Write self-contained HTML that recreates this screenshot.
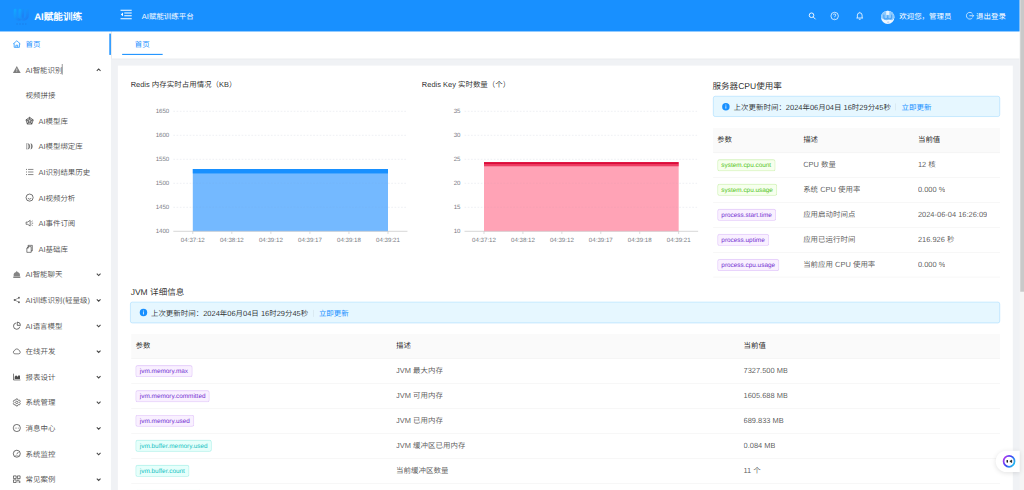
<!DOCTYPE html>
<html lang="zh-CN">
<head>
<meta charset="utf-8">
<title>AI赋能训练平台</title>
<style>
*{box-sizing:border-box;margin:0;padding:0}
html,body{width:1024px;height:490px;overflow:hidden;background:#f0f2f5}
body{font-family:"Liberation Sans",sans-serif}
#app{text-rendering:geometricPrecision;position:absolute;left:0;top:0;width:1920px;height:919px;transform:scale(.5333333);transform-origin:0 0;
 font-family:"Liberation Sans",sans-serif;font-size:14px;line-height:22px;color:rgba(0,0,0,.85);overflow:hidden;background:#f0f2f5}
.abs{position:absolute;white-space:nowrap}
svg{display:block;overflow:visible}

/* header */
#hd{position:absolute;left:0;top:0;width:1912px;height:59px;background:#1890ff;color:#fff}
#hd .logo-t{position:absolute;left:64px;top:18px;font-size:18px;font-weight:700;line-height:26px;white-space:nowrap}
#hd .crumb{position:absolute;left:266px;top:19px;font-size:14px;line-height:22px;white-space:nowrap}
#hd .t{position:absolute;top:19px;line-height:22px;white-space:nowrap}

/* sidebar */
#sb{position:absolute;left:0;top:58px;width:208.400px;height:861px;background:#fff;overflow:hidden}
#sb .it{position:absolute;left:0;width:208.400px;height:40px;line-height:40px;white-space:nowrap;color:rgba(0,0,0,.7)}
#sb .it .ic{position:absolute;left:23.500px;top:12.500px;width:15px;height:15px}
#sb .it .ic svg{width:15px;height:15px}
#sb .it .tx{position:absolute;left:48px;top:0}
#sb .it.ch .ic{left:47.500px}
#sb .it.ch .tx{left:72px}
#sb .it.ch.ni .tx{left:48px}
#sb .it .ar{position:absolute;left:180px;top:16px;width:10px;height:8px;color:rgba(0,0,0,.72)}
#sb .it .cur{position:absolute;left:116px;top:9px;width:1.200px;height:20px;background:#444}
#sb .it.on{color:#1890ff;border-right:3px solid #1890ff}

/* tabs */
#tb{position:absolute;left:208.400px;top:58px;width:1703.600px;height:51.800px;background:#fff;box-shadow:0 1px 3px rgba(0,0,0,.16);border-left:1.200px solid #d4d4d4}
#tb .tab{position:absolute;left:19.400px;top:2px;width:76px;height:43px;line-height:46.500px;text-align:center;color:#1890ff}
#tb .tab:after{content:"";position:absolute;left:0;top:41.300px;width:76px;height:1.400px;background:#1890ff}

/* main panel */
#pn{position:absolute;left:221px;top:123px;width:1678px;height:800px;background:#fff}
.h16{font-size:16px;line-height:24px;color:rgba(0,0,0,.86)}
.h14{font-size:14px;line-height:22px;color:rgba(0,0,0,.86)}
.alert{position:absolute;height:39.600px;background:#e6f7ff;border:1px solid #9fdaff;border-radius:4px;white-space:nowrap;overflow:hidden}
.alert .i{position:absolute;left:16.500px;top:12px;width:14px;height:14px}
.alert .m{position:absolute;left:38px;top:9.500px;line-height:22px;color:rgba(0,0,0,.82)}
.alert .dv{display:inline-block;width:1px;height:13px;background:rgba(0,0,0,.1);margin:0 10px 0 9px;vertical-align:-1px}
.alert a{color:#1890ff;text-decoration:none}

.tbl{position:absolute}
.tbl .th,.tbl .tr{position:relative;height:46.750px;border-bottom:1px solid #f0f0f0;white-space:nowrap}
.tbl .th{background:#fafafa;color:rgba(0,0,0,.85)}
.tbl .c{position:absolute;top:11.200px;line-height:22px;overflow:hidden;color:rgba(0,0,0,.68)}
.tbl .th .c{color:rgba(0,0,0,.88)}
.tag{display:inline-block;margin-top:.8px;height:22px;line-height:20px;padding:0 7px;font-size:12px;border:1px solid;border-radius:4px;vertical-align:top}
.tag.tg{color:#52c41a;background:#f6ffed;border-color:#b7eb8f}
.tag.tp{color:#722ed1;background:#f9f0ff;border-color:#d3adf7}
.tag.tc{color:#13c2c2;background:#e6fffb;border-color:#87e8de}

/* charts */
.ax{position:absolute;font-size:11.500px;line-height:12px;color:#787b83;white-space:nowrap}
.yl{text-align:right;width:60px;margin-left:-.6px}
.xl{text-align:center;width:72px}

/* scrollbar */
#sc{position:absolute;left:1912px;top:0;width:8px;height:919px;background:#f5f5f5}
#sc i{position:absolute;left:.5px;top:0;width:7.500px;height:546.500px;background:#c9c9c9}
/* bubble */
#bb{position:absolute;left:1867px;top:845px;width:45px;height:40px;background:#fff;border-radius:20px 0 0 20px;box-shadow:0 2px 10px rgba(0,0,0,.12)}
</style>
</head>
<body>
<div id="app">

<!-- main panel -->
<div id="pn"></div>
<div id="ct">
<div class="abs h14" style="left:245px;top:148px">Redis 内存实时占用情况（KB）</div>
<div class="abs h14" style="left:791px;top:148px">Redis Key 实时数量（个）</div>
<svg class="abs" style="left:0;top:0" width="1920" height="919" viewBox="0 0 1920 919">
<path d="M325 208.7H762M325 253.7H762M325 298.7H762M325 343.7H762M325 388.7H762" stroke="#e4e7ed" stroke-width="1.200" stroke-dasharray="3.100 3" fill="none"/>
<rect x="361.5" y="316.9" width="366.0" height="116.8" fill="#74b9ff"/>
<rect x="361.5" y="316.9" width="366.0" height="8.300" fill="#1890ff"/>
<path d="M361.5 343.7H727.5M361.5 388.7H727.5" stroke="#7a8aa0" stroke-opacity=".10" stroke-width="1.200" stroke-dasharray="3.100 3" fill="none"/>
<path d="M325 433.7H764" stroke="#c4c4c4" stroke-width="1.300" fill="none"/>
<path d="M361.5 433.7v5M434.7 433.7v5M507.9 433.7v5M581.1 433.7v5M654.3 433.7v5M727.5 433.7v5" stroke="#c4c4c4" stroke-width="1.200" fill="none"/>
</svg>
<div class="ax yl" style="left:258px;top:201.6px">1650</div>
<div class="ax yl" style="left:258px;top:246.6px">1600</div>
<div class="ax yl" style="left:258px;top:291.6px">1550</div>
<div class="ax yl" style="left:258px;top:336.6px">1500</div>
<div class="ax yl" style="left:258px;top:381.6px">1450</div>
<div class="ax yl" style="left:258px;top:426.6px">1400</div>
<div class="ax xl" style="left:325.5px;top:444px">04:37:12</div>
<div class="ax xl" style="left:398.7px;top:444px">04:38:12</div>
<div class="ax xl" style="left:471.9px;top:444px">04:39:12</div>
<div class="ax xl" style="left:545.1px;top:444px">04:39:17</div>
<div class="ax xl" style="left:618.3px;top:444px">04:39:18</div>
<div class="ax xl" style="left:691.5px;top:444px">04:39:21</div>
<svg class="abs" style="left:0;top:0" width="1920" height="919" viewBox="0 0 1920 919">
<path d="M871 208.7H1307M871 253.7H1307M871 298.7H1307M871 343.7H1307M871 388.7H1307" stroke="#e4e7ed" stroke-width="1.200" stroke-dasharray="3.100 3" fill="none"/>
<rect x="907.5" y="303.9" width="365.0" height="129.8" fill="#ffa3b6"/>
<rect x="907.5" y="303.9" width="365.0" height="4.9" fill="#dc0c3a"/>
<rect x="907.5" y="308.8" width="365.0" height="3" fill="#ee3d62"/>
<path d="M907.5 343.7H1272.5M907.5 388.7H1272.5" stroke="#7a8aa0" stroke-opacity=".10" stroke-width="1.200" stroke-dasharray="3.100 3" fill="none"/>
<path d="M871 433.7H1309" stroke="#c4c4c4" stroke-width="1.300" fill="none"/>
<path d="M907.5 433.7v5M980.5 433.7v5M1053.5 433.7v5M1126.5 433.7v5M1199.5 433.7v5M1272.5 433.7v5" stroke="#c4c4c4" stroke-width="1.200" fill="none"/>
</svg>
<div class="ax yl" style="left:804px;top:201.6px">35</div>
<div class="ax yl" style="left:804px;top:246.6px">30</div>
<div class="ax yl" style="left:804px;top:291.6px">25</div>
<div class="ax yl" style="left:804px;top:336.6px">20</div>
<div class="ax yl" style="left:804px;top:381.6px">15</div>
<div class="ax yl" style="left:804px;top:426.6px">10</div>
<div class="ax xl" style="left:871.5px;top:444px">04:37:12</div>
<div class="ax xl" style="left:944.5px;top:444px">04:38:12</div>
<div class="ax xl" style="left:1017.5px;top:444px">04:39:12</div>
<div class="ax xl" style="left:1090.5px;top:444px">04:39:17</div>
<div class="ax xl" style="left:1163.5px;top:444px">04:39:18</div>
<div class="ax xl" style="left:1236.5px;top:444px">04:39:21</div>
<div class="abs h16" style="left:1336px;top:150px">服务器CPU使用率</div>
<div class="alert" style="left:1336.5px;top:179.800px;width:538px"><svg class="i" viewBox="0 0 14 14"><circle cx="7" cy="7" r="7" fill="#1890ff"/><path d="M7 6.200v4.400" stroke="#fff" stroke-width="1.500"/><circle cx="7" cy="4" r=".95" fill="#fff"/></svg><div class="m">上次更新时间：2024年06月04日 16时29分45秒<span class="dv"></span><a>立即更新</a></div></div>
<div class="tbl" style="left:1336.5px;top:239.800px;width:538px">
<div class="th"><span class="c" style="left:8px">参数</span><span class="c" style="left:169.4px">描述</span><span class="c" style="left:384.6px">当前值</span></div>
<div class="tr"><span class="c" style="left:8px"><span class="tag tg">system.cpu.count</span></span><span class="c" style="left:169.4px">CPU 数量</span><span class="c" style="left:384.6px">12 核</span></div>
<div class="tr"><span class="c" style="left:8px"><span class="tag tg">system.cpu.usage</span></span><span class="c" style="left:169.4px">系统 CPU 使用率</span><span class="c" style="left:384.6px">0.000 %</span></div>
<div class="tr"><span class="c" style="left:8px"><span class="tag tp">process.start.time</span></span><span class="c" style="left:169.4px">应用启动时间点</span><span class="c" style="left:384.6px">2024-06-04 16:26:09</span></div>
<div class="tr"><span class="c" style="left:8px"><span class="tag tp">process.uptime</span></span><span class="c" style="left:169.4px">应用已运行时间</span><span class="c" style="left:384.6px">216.926 秒</span></div>
<div class="tr"><span class="c" style="left:8px"><span class="tag tp">process.cpu.usage</span></span><span class="c" style="left:169.4px">当前应用 CPU 使用率</span><span class="c" style="left:384.6px">0.000 %</span></div>
</div>
<div class="abs h16" style="left:245px;top:536.500px">JVM 详细信息</div>
<div class="alert" style="left:244px;top:566px;width:1630.5px"><svg class="i" viewBox="0 0 14 14"><circle cx="7" cy="7" r="7" fill="#1890ff"/><path d="M7 6.200v4.400" stroke="#fff" stroke-width="1.500"/><circle cx="7" cy="4" r=".95" fill="#fff"/></svg><div class="m">上次更新时间：2024年06月04日 16时29分45秒<span class="dv"></span><a>立即更新</a></div></div>
<div class="tbl" style="left:246.200px;top:626.200px;width:1628.400px">
<div class="th"><span class="c" style="left:8px">参数</span><span class="c" style="left:496.500px">描述</span><span class="c" style="left:1147.900px">当前值</span></div>
<div class="tr"><span class="c" style="left:8px"><span class="tag tp">jvm.memory.max</span></span><span class="c" style="left:496.500px">JVM 最大内存</span><span class="c" style="left:1147.900px">7327.500 MB</span></div>
<div class="tr"><span class="c" style="left:8px"><span class="tag tp">jvm.memory.committed</span></span><span class="c" style="left:496.500px">JVM 可用内存</span><span class="c" style="left:1147.900px">1605.688 MB</span></div>
<div class="tr"><span class="c" style="left:8px"><span class="tag tp">jvm.memory.used</span></span><span class="c" style="left:496.500px">JVM 已用内存</span><span class="c" style="left:1147.900px">689.833 MB</span></div>
<div class="tr"><span class="c" style="left:8px"><span class="tag tc">jvm.buffer.memory.used</span></span><span class="c" style="left:496.500px">JVM 缓冲区已用内存</span><span class="c" style="left:1147.900px">0.084 MB</span></div>
<div class="tr"><span class="c" style="left:8px"><span class="tag tc">jvm.buffer.count</span></span><span class="c" style="left:496.500px">当前缓冲区数量</span><span class="c" style="left:1147.900px">11 个</span></div>
<div class="tr"><span class="c" style="left:8px"><span class="tag tc">jvm.threads.daemon</span></span><span class="c" style="left:496.500px">JVM 守护线程数量</span><span class="c" style="left:1147.900px">35 个</span></div>
</div>
</div>

<!-- tabs -->
<div id="tb"><div class="tab">首页</div></div>

<!-- sidebar -->
<div id="sb">
<div class="it on" style="top:4.8px"><span class="ic"><svg viewBox="0 0 14 14" width="14" height="14" fill="none" stroke="currentColor" stroke-width="1.3" stroke-linejoin="round"><path d="M.7 6.900 7 1.400l6.300 5.500"/><path d="M2.400 5.900v6.900h9.200V5.900"/><path d="M5.400 12.800V9.100h3.200v3.700"/></svg></span><span class="tx">首页</span></div>
<div class="it" style="top:52.8px"><span class="ic"><svg viewBox="0 0 14 14" width="14" height="14"><path d="M7 .5 13.800 12.800H.2z" fill="currentColor" fill-opacity=".72"/><path d="M7 5v3.8" stroke="#fff" stroke-width="1.2"/><circle cx="7" cy="10.5" r=".75" fill="#fff"/></svg></span><span class="tx">AI智能识别</span><span class="cur"></span><svg class="ar" viewBox="0 0 10 8" fill="none" stroke="currentColor" stroke-width="2"><path d="M1.500 5.800 5 2.300l3.500 3.500"/></svg></div>
<div class="it ch ni" style="top:100.8px"><span class="tx">视频拼接</span></div>
<div class="it ch" style="top:148.8px"><span class="ic"><svg viewBox="0 0 14 14" width="14" height="14" fill="none" stroke="currentColor" stroke-width="1.150" stroke-linejoin="round"><path d="M7 .8 13.400 5.400 11 12.800H3L.6 5.400z" fill="currentColor" fill-opacity=".28"/><path d="M7 4.300 9.700 6.200 8.700 9.400H5.300L4.300 6.200zM7 .8v3.500M13.400 5.400 9.700 6.200M11 12.800 8.700 9.400M3 12.800 5.300 9.400M.6 5.400 4.300 6.200"/></svg></span><span class="tx">AI模型库</span></div>
<div class="it ch" style="top:196.8px"><span class="ic"><svg viewBox="0 0 14 14" width="14" height="14" fill="currentColor" fill-opacity=".7"><path d="M.8 2h2.600v1H2.800v8h.6v1H.8v-1h.6V3H.8z"/><path d="M4.700 2c3.400 1.400 3.400 8.600 0 10 1.200-3.300 1.200-6.700 0-10z" stroke="currentColor" stroke-width=".9" stroke-opacity=".7"/><path d="M9.300 2c3.400 1.400 3.400 8.600 0 10 1.200-3.300 1.200-6.700 0-10z" stroke="currentColor" stroke-width=".9" stroke-opacity=".7"/></svg></span><span class="tx">AI模型绑定库</span></div>
<div class="it ch" style="top:244.8px"><span class="ic"><svg viewBox="0 0 14 14" width="14" height="14" fill="none" stroke="currentColor" stroke-width="1.150"><path d="M4.300 2.500h9.400M4.300 7h9.400M4.300 11.500h9.400"/><path d="M.8 2.500h1.500M.8 7h1.500M.8 11.500h1.500" stroke-width="1.500"/></svg></span><span class="tx">AI识别结果历史</span></div>
<div class="it ch" style="top:292.8px"><span class="ic"><svg viewBox="0 0 14 14" width="14" height="14" fill="none" stroke="currentColor" stroke-width="1.350"><circle cx="7" cy="7" r="6.200"/><path d="M4.200 7.600c.6 1.500 1.600 2.200 2.800 2.200s2.200-.7 2.800-2.200" stroke-width="1.200"/></svg></span><span class="tx">AI视频分析</span></div>
<div class="it ch" style="top:340.8px"><span class="ic"><svg viewBox="0 0 14 14" width="14" height="14" fill="none" stroke="currentColor" stroke-width="1.200" stroke-linejoin="round"><path d="M.9 5h2.800L8 2v10L3.700 9H.9z"/><path d="M10.300 4.200l2-1.200M10.600 7h2.600M10.300 9.800l2 1.200"/></svg></span><span class="tx">AI事件订阅</span></div>
<div class="it ch" style="top:388.8px"><span class="ic"><svg viewBox="0 0 14 14" width="14" height="14" fill="none" stroke="currentColor" stroke-width="1.200" stroke-linejoin="round"><path d="M4.200 3.200V1h7.600v9.600H9.800"/><path d="M2.200 5.800 4.800 3.200h5v10H2.200z"/><path d="M2.200 5.800h2.600V3.200"/></svg></span><span class="tx">AI基础库</span></div>
<div class="it" style="top:436.8px"><span class="ic"><svg viewBox="0 0 14 14" width="14" height="14" fill="currentColor" fill-opacity=".68"><path d="M7 .6 8.300 2.600c2.600.5 4.300 2.600 4.300 5.400 0 .8-.2 1.500-.5 2.100H1.900C1.600 9.500 1.400 8.800 1.400 8c0-2.800 1.700-4.900 4.300-5.400z"/><path d="M.8 10.800h12.400v2.400H.8z"/></svg></span><span class="tx">AI智能聊天</span><svg class="ar" viewBox="0 0 10 8" fill="none" stroke="currentColor" stroke-width="2"><path d="M1.500 2.200 5 5.700l3.500-3.500"/></svg></div>
<div class="it" style="top:484.8px"><span class="ic"><svg viewBox="0 0 14 14" width="14" height="14"><g opacity=".82"><path d="M10.800 3 3.200 7l7.600 4" fill="none" stroke="currentColor" stroke-width="1.100"/><circle cx="10.800" cy="3" r="1.700" fill="currentColor"/><circle cx="3.200" cy="7" r="1.700" fill="currentColor"/><circle cx="10.800" cy="11" r="1.700" fill="currentColor"/></g></svg></span><span class="tx">AI训练识别(轻量级)</span><svg class="ar" viewBox="0 0 10 8" fill="none" stroke="currentColor" stroke-width="2"><path d="M1.500 2.200 5 5.700l3.500-3.500"/></svg></div>
<div class="it" style="top:532.8px"><span class="ic"><svg viewBox="0 0 14 14" width="14" height="14" fill="none" stroke="currentColor" stroke-width="1.400"><path d="M5.800 2.300A5.600 5.600 0 1 0 12.300 9"/><path d="M7.800.8v5.800h5.600A5.700 5.700 0 0 0 7.800.8z" stroke-linejoin="round"/></svg></span><span class="tx">AI语言模型</span><svg class="ar" viewBox="0 0 10 8" fill="none" stroke="currentColor" stroke-width="2"><path d="M1.500 2.200 5 5.700l3.500-3.500"/></svg></div>
<div class="it" style="top:580.8px"><span class="ic"><svg viewBox="0 0 14 14" width="14" height="14" fill="none" stroke="currentColor" stroke-width="1.200" stroke-linejoin="round"><path d="M3.600 11.600a2.900 2.900 0 0 1-.4-5.700 4 4 0 0 1 7.700 0 2.900 2.900 0 0 1-.5 5.700z"/></svg></span><span class="tx">在线开发</span><svg class="ar" viewBox="0 0 10 8" fill="none" stroke="currentColor" stroke-width="2"><path d="M1.500 2.200 5 5.700l3.500-3.500"/></svg></div>
<div class="it" style="top:628.8px"><span class="ic"><svg viewBox="0 0 14 14" width="14" height="14"><path d="M1.300 1.500v11h12" fill="none" stroke="currentColor" stroke-width="1.300"/><path d="M3.300 11V7l2.400-2.600 2.500 2.400 2.600-3 1.800 1.600V11z" fill="currentColor"/></svg></span><span class="tx">报表设计</span><svg class="ar" viewBox="0 0 10 8" fill="none" stroke="currentColor" stroke-width="2"><path d="M1.500 2.200 5 5.700l3.500-3.500"/></svg></div>
<div class="it" style="top:676.8px"><span class="ic"><svg viewBox="0 0 14 14" width="14" height="14" fill="none" stroke="currentColor" stroke-width="1.200" stroke-linejoin="round"><path d="M5.700.9h2.600l.5 1.700 1.300.8 1.700-.5 1.300 2.300-1.200 1.200v1.400l1.200 1.200-1.300 2.300-1.700-.5-1.300.8-.5 1.700H5.700l-.5-1.700-1.300-.8-1.700.5L.9 9.100l1.200-1.200V6.400L.9 5.200l1.300-2.300 1.700.5 1.300-.8z"/><circle cx="7" cy="7" r="2.100"/></svg></span><span class="tx">系统管理</span><svg class="ar" viewBox="0 0 10 8" fill="none" stroke="currentColor" stroke-width="2"><path d="M1.500 2.200 5 5.700l3.500-3.500"/></svg></div>
<div class="it" style="top:724.8px"><span class="ic"><svg viewBox="0 0 14 14" width="14" height="14" fill="none" stroke="currentColor" stroke-width="1.400"><rect x=".9" y=".9" width="12.200" height="12.200" rx="5.600"/><path d="M3.600 7.200h1.300M6.350 7.200h1.300M9.100 7.200h1.300" stroke-width="1.300"/></svg></span><span class="tx">消息中心</span><svg class="ar" viewBox="0 0 10 8" fill="none" stroke="currentColor" stroke-width="2"><path d="M1.500 2.200 5 5.700l3.500-3.500"/></svg></div>
<div class="it" style="top:772.8px"><span class="ic"><svg viewBox="0 0 14 14" width="14" height="14" fill="none" stroke="currentColor" stroke-width="1.400"><circle cx="7" cy="7.200" r="6.100"/><path d="M6.800 8.200 9.800 4.200" stroke-width="1.300"/><path d="M3.600 10.600h6.800" stroke-width="1" stroke-opacity=".7"/></svg></span><span class="tx">系统监控</span><svg class="ar" viewBox="0 0 10 8" fill="none" stroke="currentColor" stroke-width="2"><path d="M1.500 2.200 5 5.700l3.500-3.500"/></svg></div>
<div class="it" style="top:820.8px"><span class="ic"><svg viewBox="0 0 14 14" width="14" height="14" fill="none" stroke="currentColor" stroke-width="1.300"><path d="M1.200 1.200h4.700v4.700H1.200zM8.100 1.200h4.700v4.700H8.100zM1.200 8.100h4.700v4.700H1.200z"/><path d="M8.100 8.100h1.800v1.800H8.100zM11 11h1.800v1.800H11zM11.900 8v1.600M8 11.900h1.600" stroke-width="1"/></svg></span><span class="tx">常见案例</span><svg class="ar" viewBox="0 0 10 8" fill="none" stroke="currentColor" stroke-width="2"><path d="M1.500 2.200 5 5.700l3.500-3.500"/></svg></div>
</div>

<!-- header -->
<div id="hd">
  <svg class="abs" style="left:25px;top:15px" width="30" height="36" viewBox="0 0 30 36">
    <defs><linearGradient id="lg" x1="0" y1="0" x2="1" y2="1"><stop offset="0" stop-color="#12a4ff"/><stop offset="1" stop-color="#1f7cf2"/></linearGradient></defs>
    <path d="M3.400 3.900V14.500a6.900 6.900 0 0 0 13.800 0V3.900" fill="none" stroke="url(#lg)" stroke-width="5.300" stroke-linecap="round"/>
    <path d="M12.400 3.900V14.500a6.900 6.900 0 0 0 13.800 0V3.900" fill="none" stroke="url(#lg)" stroke-width="5.300" stroke-linecap="round" stroke-opacity=".9"/>
    <path d="M5.500 30h3M11 30h3M16.500 30h3M22 30h2.500" stroke="#1b7fea" stroke-width="2"/>
  </svg>
  <div class="logo-t">AI赋能训练</div>
  <svg class="abs" style="left:226px;top:18px" width="21" height="18" viewBox="0 0 21 18" fill="none" stroke="#fff" stroke-width="1.900">
    <path d="M0 1h21M7 6.300h14M7 11.700h14M0 17h21"/><path d="M4.600 5.600v6.800L.6 9z" fill="#fff" stroke="none"/>
  </svg>
  <div class="crumb">AI赋能训练平台</div>
  <svg class="abs" style="left:1516px;top:23px" width="14" height="14" viewBox="0 0 14 14" fill="none" stroke="#fff" stroke-width="1.700"><circle cx="5.600" cy="5.600" r="4.300"/><path d="M8.800 8.800l4.400 4.400"/></svg>
  <svg class="abs" style="left:1557px;top:22px" width="16" height="16" viewBox="0 0 16 16" fill="none" stroke="#fff" stroke-width="1.400"><circle cx="8" cy="8" r="7"/><path d="M5.800 6.400c0-3 4.400-3 4.400 0 0 1.600-2.200 1.600-2.200 3.400"/><circle cx="8" cy="11.900" r=".8" fill="#fff" stroke="none"/></svg>
  <svg class="abs" style="left:1605px;top:21px" width="14" height="17" viewBox="0 0 14 17" fill="none" stroke="#fff" stroke-width="1.500" stroke-linejoin="round"><path d="M7 1.200v1.200M2.600 12.600V7.400a4.400 4.400 0 0 1 8.800 0v5.200M.8 12.800h12.400M5.400 15.200h3.200"/></svg>
  <svg class="abs" style="left:1651.600px;top:19.900px" width="25" height="25" viewBox="0 0 25 25">
    <defs><clipPath id="av"><circle cx="12.500" cy="12.500" r="12.500"/></clipPath></defs>
    <circle cx="12.500" cy="12.500" r="12.500" fill="#f1f8ff"/>
    <g clip-path="url(#av)">
      <path d="M0 13.500V0h25v13.500c-2 4-5.500 5.500-8 3.500-1.500-1.500-3-1.500-4.500 0-2.500 2-6.500 1-12.500-3.500z" fill="#8ccaff"/>
      <rect x="9.600" y="0" width="5.800" height="8" fill="#e6f3ff"/>
      <path d="M5.200 8.500v3.200a3.700 3.700 0 0 0 7.400 0V9.500M12.400 11.700a3.700 3.700 0 0 0 7.400 0V8.500" fill="none" stroke="#4fa6f7" stroke-width="2.300" stroke-linecap="round"/>
      <path d="M12.200 20.500v3M14.200 20v3.500" stroke="#9ab8f0" stroke-width=".9"/>
    </g>
  </svg>
  <div class="t" style="left:1686px">欢迎您，管理员</div>
  <svg class="abs" style="left:1811px;top:22px" width="15" height="15" viewBox="0 0 15 15" fill="none" stroke="#fff" stroke-width="1.300"><path d="M12.300 3.600A6.300 6.300 0 1 0 12.300 11.400"/><path d="M6.500 7.500h8M12.300 5.200l2.300 2.300-2.300 2.300" stroke-linejoin="round"/></svg>
  <div class="t" style="left:1830px">退出登录</div>
</div>

<div id="sc"><i></i></div>
<div id="bb"><svg class="abs" style="left:13px;top:8px" width="24" height="24" viewBox="0 0 24 24">
<defs><linearGradient id="bg" x1="0" y1=".2" x2="1" y2=".8"><stop offset="0" stop-color="#b23cf0"/><stop offset=".45" stop-color="#3b45f5"/><stop offset="1" stop-color="#22c3ee"/></linearGradient></defs>
<circle cx="12" cy="12" r="10.300" fill="#fff" stroke="url(#bg)" stroke-width="3.200"/>
<rect x="7.300" y="9.400" width="2.600" height="5.200" rx="1.200" fill="#111"/><path d="M17 9.600v4.800l-3.600-2.400z" fill="#111" stroke="#111" stroke-width="1" stroke-linejoin="round"/></svg></div>
</div>
</body>
</html>
